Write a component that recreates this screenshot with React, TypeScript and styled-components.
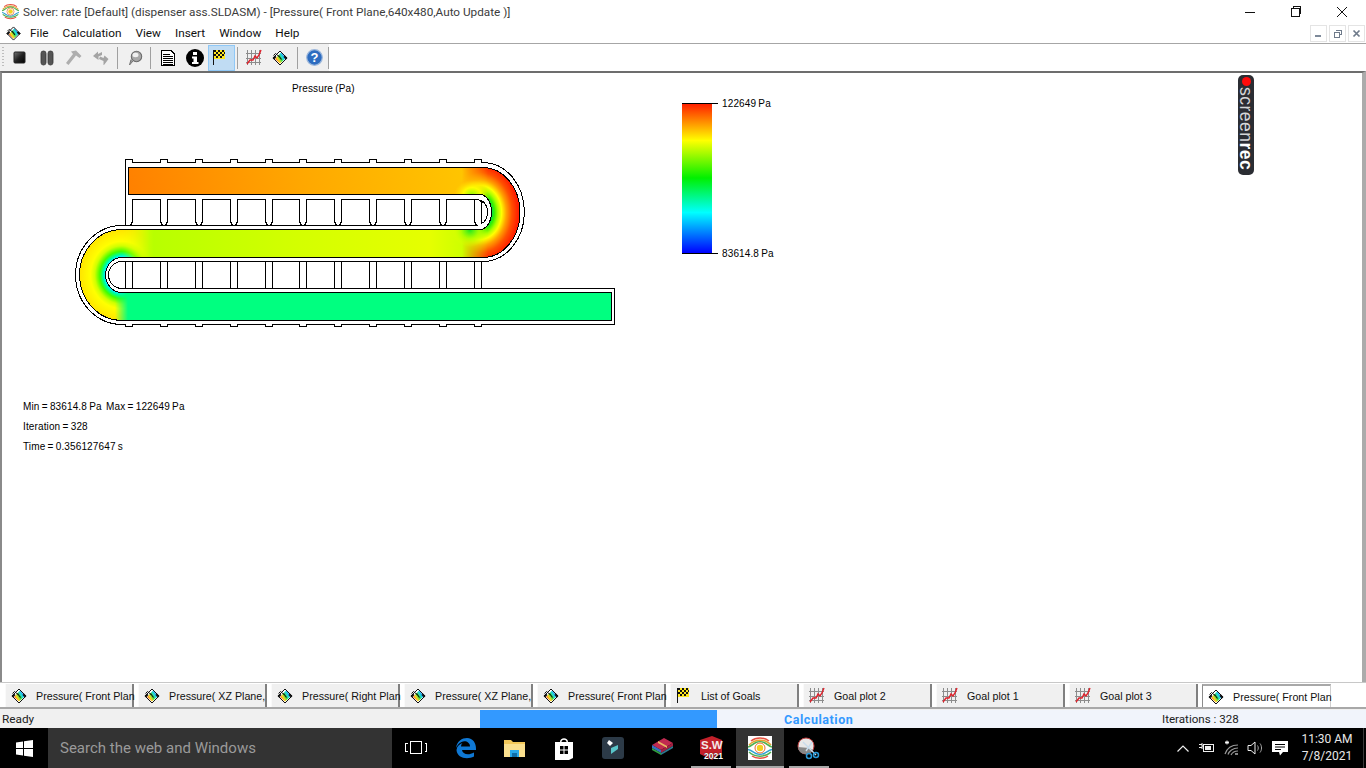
import React, { useId } from "react";
import styled, { createGlobalStyle } from "styled-components";

const Global = createGlobalStyle`
  html, body { margin: 0; padding: 0; background: #fff; overflow: hidden; }
  * { box-sizing: border-box; }
`;

const UI = `"Liberation Sans", Arial, sans-serif`;
const WIN = `Roboto, "Noto Sans", sans-serif`;

const Page = styled.div`
  width: 1366px; height: 768px; display: flex; flex-direction: column;
  font-family: ${UI}; color: #000; background: #fff; overflow: hidden;
`;
const TitleBar = styled.div`
  height: 23px; flex: none; display: flex; align-items: center; background: #fff;
`;
const TitleIcon = styled.span`
  width: 23px; display: flex; justify-content: center; padding-right: 3px;
`;
const TitleText = styled.span`
  font-family: ${WIN}; font-size: 11.75px; color: #3c3c3c; white-space: nowrap; flex: 1;
`;
const WinButton = styled.span`
  width: 46px; height: 22px; display: flex; align-items: center; justify-content: center;
`;
const WinButtons = styled.div`
  display: flex; margin-right: 1px;
`;
const MenuBar = styled.div`
  height: 20px; flex: none; display: flex; align-items: center; background: #fff; padding-left: 6px;
`;
const MenuItems = styled.div`
  display: flex; flex: 1; gap: 14px; margin-left: 9px; font-family: ${WIN}; font-size: 11.8px; color: #111;
`;
const MdiButtons = styled.div`
  display: flex; gap: 2px; margin-right: 1px;
`;
const MdiButton = styled.span`
  width: 17px; height: 17px; border: 1px solid #e4e4e4; display: flex; align-items: center; justify-content: center;
`;
const Toolbar = styled.div`
  height: 28px; flex: none; display: flex; align-items: center; background: #fff;
  border-top: 1px solid #a6a6a6;
`;
const ToolGroup = styled.div`
  height: 27px; display: flex; align-items: center; background: #f0f0f0; padding-left: 6px; position: relative; width: 329px;
`;
const Grip = styled.span`
  position: absolute; left: 2px; top: 3px; bottom: 3px; width: 2px;
  background: repeating-linear-gradient(to bottom, #bdbdbd 0 1px, transparent 1px 3px);
`;
const ToolButton = styled.span<{ $w?: number; $active?: boolean }>`
  width: ${(p) => p.$w ?? 27}px; height: 26px; flex: none; display: flex; align-items: center;
  justify-content: ${(p) => (p.$active ? "flex-start" : "center")};
  padding-left: ${(p) => (p.$active ? "3px" : "0")};
  background: ${(p) => (p.$active ? "#c0dcf3" : "transparent")};
  border: ${(p) => (p.$active ? "1px solid #90c8f6" : "none")};
`;
const ToolSep = styled.span<{ $l: number; $r: number }>`
  width: 1px; height: 22px; flex: none; background: #a0a0a0;
  margin-left: ${(p) => p.$l}px; margin-right: ${(p) => p.$r}px;
`;
const Canvas = styled.div`
  flex: 1; position: relative; background: #fff; min-height: 0;
  border-top: 2px solid #6d6d6d; border-left: 2px solid #8a8a8a; border-right: 4px solid #ababab;
  overflow: hidden;
`;
const PlotSvg = styled.svg`
  position: absolute; left: -2px; top: -2px; display: block;
`;
const PlotLabel = styled.div<{ $x: number; $y: number }>`
  position: absolute; left: ${(p) => p.$x - 2}px; top: ${(p) => p.$y - 72}px;
  font-family: "Liberation Sans", Arial, sans-serif; font-size: 10px; line-height: 12px; white-space: pre; color: #000;
  letter-spacing: 0.13px; word-spacing: -0.7px;
`;
const RecBadge = styled.div`
  position: absolute; left: 1236px; top: 2px; width: 16px; height: 100px; border-radius: 5px;
  background: #2b2d33; display: flex; flex-direction: column; align-items: center; padding-top: 2px;
`;
const RecDot = styled.span`
  width: 9px; height: 9px; border-radius: 50%; background: #ff0b0b; flex: none;
`;
const RecText = styled.span`
  writing-mode: vertical-rl; font-family: "Liberation Sans", sans-serif; font-size: 17.5px; line-height: 16px; color: #d5d6d8; margin-top: 1px; white-space: nowrap; letter-spacing: 0.5px;
  b { color: #fff; font-weight: 700; }
`;
const TabStrip = styled.div`
  height: 27px; flex: none; display: flex; padding: 1px 0 0 5px; background: #fff;
  border-top: 1px solid #c8c8c8; border-bottom: 2px solid #a8a8a8; align-items: stretch;
`;
const Tab = styled.div<{ $active?: boolean }>`
  width: 129px; margin-right: 4px; flex: none; display: flex; align-items: center;
  background: ${(p) => (p.$active ? "#fff" : "#f0f0f0")};
  border-right: ${(p) => (p.$active ? "1px solid #cfcfcf" : "2px solid #808080")};
  border-left: ${(p) => (p.$active ? "1px solid #8c8c8c" : "1px solid #fafafa")};
  border-top: ${(p) => (p.$active ? "2px solid #a8a8a8" : "none")};
`;
const TabIcon = styled.span`
  width: 26px; margin-right: 4px; flex: none; display: flex; justify-content: center;
`;
const TabText = styled.span`
  font-family: ${UI}; font-size: 10.7px; white-space: nowrap; color: #111;
`;
const StatusBar = styled.div`
  height: 19px; flex: none; display: flex; background: #f0f0f0; padding-top: 1px;
`;
const Ready = styled.span`
  width: 480px; padding: 1px 0 0 2px; font-family: ${WIN}; font-size: 11.8px; line-height: 17px; color: #222;
`;
const ProgressTrack = styled.div`
  flex: 1; position: relative; background: #f1f4fb; display: flex; align-items: center;
`;
const ProgressFill = styled.div`
  position: absolute; left: 0; top: 0; bottom: 0; background: #3399ff;
`;
const ProgressLabel = styled.span`
  margin-left: 304px; width: 378px; font-family: ${WIN}; font-weight: 700; font-size: 12.5px; color: #3399ff; letter-spacing: 0.55px; position: relative;
`;
const Iterations = styled.span`
  font-family: ${WIN}; font-size: 11.6px; color: #222; position: relative;
`;
const Taskbar = styled.div`
  height: 40px; flex: none; background: #000; display: flex; align-items: stretch; color: #fff;
`;
const StartButton = styled.span`
  width: 48px; flex: none; display: flex; align-items: center; justify-content: center;
`;
const SearchBox = styled.div`
  width: 344px; flex: none; background: #333; color: #9a9a9a; font-family: ${WIN}; font-size: 15px;
  display: flex; align-items: center; padding-left: 12px; white-space: nowrap;
`;
const TaskSlot = styled.span<{ $w?: number; $ml?: number; $active?: boolean; $open?: boolean }>`
  width: ${(p) => p.$w ?? 49}px; margin-left: ${(p) => p.$ml ?? 0}px; flex: none; display: flex; align-items: center; justify-content: center; position: relative;
  background: ${(p) => (p.$active ? "#333" : "transparent")};
  ${(p) => p.$open ? `&::after { content: ""; position: absolute; left: ${p.$active ? 0 : 5}px; right: ${p.$active ? 0 : 4}px; bottom: 0; height: 2px; background: #a8a8a8; }` : ""}
`;
const SwBadge = styled.span`
  position: absolute; left: 12px; top: 8px; width: 25px; height: 25px;
`;
const SwYear = styled.span`
  position: absolute; left: 18px; top: 23px; font-family: ${UI}; font-weight: 700; font-size: 8.5px; color: #fff; text-shadow: 0 0 1px #000;
`;
const SwMark = styled.span`
  position: absolute; left: 15px; top: 11px; font-family: ${UI}; font-weight: 700; font-size: 11.5px; color: #f4e8e8;
`;
const Tray = styled.div`
  flex: 1; display: flex; align-items: center; justify-content: flex-end; padding-right: 2px;
`;
const TrayIcon = styled.span<{ $w: number }>`
  width: ${(p) => p.$w}px; flex: none; display: flex; justify-content: center; align-items: center;
`;
const Clock = styled.div`
  width: 66px; margin-left: 1px; text-align: center; font-family: ${WIN}; font-size: 12px; line-height: 17px; color: #e8e8e8;
`;
const TrayEdge = styled.span`
  width: 1px; height: 40px; background: #3a3a3a; margin-left: 3px;
`;

const Diamond = ({ s = 16 }: { s?: number }) => {
  const id = useId();
  return (
    <svg width={s} height={s} viewBox="0 0 16 16">
      <defs>
        <linearGradient id={id} x1="0.1" y1="0.9" x2="1" y2="0.35">
          <stop offset="0" stopColor="#f03030" />
          <stop offset="0.28" stopColor="#ffd820" />
          <stop offset="0.5" stopColor="#40e040" />
          <stop offset="0.72" stopColor="#20d8e8" />
          <stop offset="1" stopColor="#2040e8" />
        </linearGradient>
      </defs>
      <path d="M8 1 L15 8 L8 15 L1 8 Z" fill="#fff" />
      <path d="M9 2.500 L14 8 L8 13.500 L3 9 Z" fill={`url(#${id})`} />
      <path d="M1.500 5.500 L3.500 3.500 L7 6.500 M8 1 L1 8 L8 15 M8 1 L15 8 L8 15" fill="none" stroke="#111" strokeWidth="1" />
      <path d="M0.500 8 L3 5.500 L4.500 7 L2 9.500 Z M15.500 8 L13 5.500 L11.500 7 L14 9.500 Z" fill="#111" />
      <path d="M6.500 5.500 L9.500 9.500" stroke="#111" strokeWidth="1.100" />
    </svg>
  );
};

const Flag = () => (
  <svg width="16" height="17" viewBox="0 0 16 17" shapeRendering="crispEdges">
    <rect x="1" y="1" width="1" height="15" fill="#111" />
    <rect x="2" y="1" width="11" height="9" fill="#ffe820" />
    <g fill="#111">
      <rect x="2" y="1" width="2" height="2" /><rect x="6" y="1" width="2" height="2" /><rect x="10" y="1" width="2" height="2" />
      <rect x="4" y="3" width="2" height="2" /><rect x="8" y="3" width="2" height="2" /><rect x="12" y="3" width="1" height="2" />
      <rect x="2" y="5" width="2" height="2" /><rect x="6" y="5" width="2" height="2" /><rect x="10" y="5" width="2" height="2" />
      <rect x="4" y="7" width="2" height="2" /><rect x="8" y="7" width="2" height="2" />
    </g>
  </svg>
);

const PlotIcon = () => (
  <svg width="16" height="17" viewBox="0 0 16 17">
    <g stroke="#8c8c8c" strokeWidth="1" shapeRendering="crispEdges">
      <path d="M1.500 1V16M5.500 1V16M9.500 1V16M13.500 1V16M0 4.500H15M0 9.500H15M0 13.500H15" fill="none" />
    </g>
    <path d="M1 15 L4 11 L7 11 L9 7 L11 9 L13 6 L15 1" fill="none" stroke="#e0202a" strokeWidth="1.400" />
  </svg>
);

const SolverIcon = ({ s = 16, white }: { s?: number; white?: boolean }) => (
  <svg width={s} height={s} viewBox="0 0 24 24">
    {white && <rect width="24" height="24" fill="#fff" />}
    <path d="M3 5 C8 1 16 1 21 5" stroke="#e85040" strokeWidth="1.500" fill="none" />
    <path d="M1 9 C7 2.500 17 2.500 23 9" stroke="#e8a030" strokeWidth="1.500" fill="none" />
    <path d="M0 11 C3 10 5 8 8 6.500 C10 5.500 14 5.500 16 6.500 C19 8 21 10 24 11" stroke="#50b050" strokeWidth="1.500" fill="none" />
    <path d="M0 13.500 C3 14 5 16 8 17.500 C10 18.500 14 18.500 16 17.500 C19 16 21 14 24 13.500" stroke="#30a0d0" strokeWidth="1.500" fill="none" />
    <path d="M1 16 C7 21.500 17 21.500 23 16" stroke="#50b050" strokeWidth="1.500" fill="none" />
    <path d="M4 20 C8 23 16 23 20 20" stroke="#e85040" strokeWidth="1.500" fill="none" />
    <circle cx="12" cy="12" r="5" fill="#fff" stroke="#e86a30" strokeWidth="1" />
    <circle cx="12" cy="12" r="3.200" fill="#f4d020" />
  </svg>
);

const Stop = () => (
  <svg width="14" height="14" viewBox="0 0 14 14">
    <defs><linearGradient id="stopg" x1="0" y1="0" x2="1" y2="1"><stop offset="0" stopColor="#777" /><stop offset="0.5" stopColor="#222" /><stop offset="1" stopColor="#000" /></linearGradient></defs>
    <rect x="1" y="1" width="11" height="11" rx="1" fill="url(#stopg)" stroke="#222" />
  </svg>
);
const Pause = () => (
  <svg width="14" height="16" viewBox="0 0 14 16">
    <rect x="1" y="1" width="5" height="14" rx="2.400" fill="#555" stroke="#333" strokeWidth="0.800" />
    <rect x="8" y="1" width="5" height="14" rx="2.400" fill="#555" stroke="#333" strokeWidth="0.800" />
  </svg>
);
const Hammer = () => (
  <svg width="18" height="16" viewBox="0 0 18 16">
    <path d="M6 1.500 L11 .500 L16.500 6 L14.500 8 L11 5.500 L3.500 15 L1 13 L8 4 Z" fill="#aeaeae" />
  </svg>
);
const Arrows = () => (
  <svg width="16" height="16" viewBox="0 0 16 16">
    <path d="M0 6 L5 1.500 L5 4 L9 2 L9 5 L5.500 6.500 L5.500 10 Z" fill="#a4a4a4" />
    <path d="M15.500 9 L11 15 L10.500 15 L10.500 11 L6 9 L7 6.500 L10.500 8 L11.500 5.500 Z" fill="#a4a4a4" />
  </svg>
);
const Pin = () => (
  <svg width="16" height="16" viewBox="0 0 16 16">
    <circle cx="9.500" cy="6.500" r="5.200" fill="#a8a8a8" stroke="#6c6c6c" strokeWidth="1.100" />
    <ellipse cx="8.500" cy="5" rx="3" ry="2.200" fill="#f0f0f0" />
    <path d="M6 11 L2.500 15 L4 9.500" fill="#999" stroke="#777" strokeWidth="1" />
  </svg>
);
const Doc = () => (
  <svg width="16" height="18" viewBox="0 0 16 18" shapeRendering="crispEdges">
    <path d="M1.500 1.500H11L14.500 5V16.500H1.500Z" fill="#fff" stroke="#000" />
    <path d="M3 5H10M3 7H13M3 9H13M3 11H13M3 13H13M3 15H13" stroke="#000" />
  </svg>
);
const Info = () => (
  <svg width="18" height="18" viewBox="0 0 18 18">
    <circle cx="9" cy="9" r="9" fill="#000" />
    <rect x="7" y="3" width="4" height="3" fill="#fff" />
    <path d="M6 7.500H11V13H12.500V15H6V13H7.500V9.500H6Z" fill="#fff" />
  </svg>
);
const Help = () => (
  <svg width="17" height="17" viewBox="0 0 17 17">
    <circle cx="8.500" cy="8.500" r="7.800" fill="#2d6cc0" stroke="#9db8dc" strokeWidth="1.200" />
    <text x="8.500" y="13" textAnchor="middle" fontFamily="Liberation Sans" fontWeight="700" fontSize="13" fill="#fff">?</text>
  </svg>
);

const teeth = [160.5, 195.5, 230.5, 265.5, 299.5, 334.5, 369.5, 404.5, 439.5, 474.5];
const cells: [number, number][] = [
  [132.5, 160.5], [167.5, 195.5], [202.5, 230.5], [237.5, 265.5], [272.5, 299.5],
  [306.5, 334.5], [341.5, 369.5], [376.5, 404.5], [411.5, 439.5], [446.5, 474.5],
];
const FLUID =
  "M128.5 167.5 H483 A37 45 0 0 1 483 257.5 H122 A16.5 17.5 0 0 0 122 292.5 H611.5 V320.5 H122 A42.5 45.5 0 0 1 122 229.5 H480 A11.5 17.5 0 0 0 480 194.5 H128.5 Z";

const topWall =
  "M125.5 225.5 V159.5 H132.5 V162.5 " +
  teeth.map((x) => `H${x} V159.5 H${x + 7} V162.5`).join(" ") +
  " H483 A41 49 0 0 1 483 261.5 H122 A13.5 13.5 0 0 0 122 288.5 H614.5 V324.5 " +
  teeth.slice().reverse().map((x) => `H${x + 7} V326.5 H${x} V324.5`).join(" ") +
  " H132.5 V326.5 H125.5 V324.5 H122 A46.5 49.5 0 0 1 122 225.5 H471";

const Plot = () => (
  <PlotSvg width="1366" height="613" viewBox="0 71 1366 613">
    <defs>
      <linearGradient id="legend" x1="0" y1="0" x2="0" y2="1">
        <stop offset="0" stopColor="#ff1a00" />
        <stop offset="0.25" stopColor="#ffff00" />
        <stop offset="0.5" stopColor="#00f000" />
        <stop offset="0.73" stopColor="#00ffff" />
        <stop offset="1" stopColor="#0000ff" />
      </linearGradient>
      <linearGradient id="ch1" gradientUnits="userSpaceOnUse" x1="128" y1="195" x2="470" y2="120">
        <stop offset="0" stopColor="#ff8000" />
        <stop offset="0.5" stopColor="#ffa800" />
        <stop offset="1" stopColor="#ffc800" />
      </linearGradient>
      <linearGradient id="ch2" gradientUnits="userSpaceOnUse" x1="130" y1="229" x2="470" y2="229">
        <stop offset="0" stopColor="#e8ff00" />
        <stop offset="0.07" stopColor="#b8ff00" />
        <stop offset="0.5" stopColor="#d4ff00" />
        <stop offset="0.88" stopColor="#e6ff00" />
        <stop offset="1" stopColor="#c8ff00" />
      </linearGradient>
      <radialGradient id="uL" gradientUnits="userSpaceOnUse" cx="0" cy="0" r="1" gradientTransform="translate(122 275) scale(42.5 45.5)">
        <stop offset="0.35" stopColor="#0090ff" />
        <stop offset="0.4" stopColor="#00f0ff" />
        <stop offset="0.45" stopColor="#00ff90" />
        <stop offset="0.52" stopColor="#40ff00" />
        <stop offset="0.64" stopColor="#d0ff00" />
        <stop offset="0.74" stopColor="#ffff00" />
        <stop offset="1" stopColor="#ffe400" />
      </radialGradient>
      <radialGradient id="uR" gradientUnits="userSpaceOnUse" cx="0" cy="0" r="1" gradientTransform="translate(480 212.5) scale(40 50)">
        <stop offset="0.3" stopColor="#00e040" />
        <stop offset="0.37" stopColor="#40f000" />
        <stop offset="0.45" stopColor="#a8ff00" />
        <stop offset="0.54" stopColor="#ffff00" />
        <stop offset="0.66" stopColor="#ffa000" />
        <stop offset="0.8" stopColor="#ff5000" />
        <stop offset="0.95" stopColor="#ff2000" />
      </radialGradient>
      <radialGradient id="glowG">
        <stop offset="0" stopColor="#20e820" stopOpacity="1" />
        <stop offset="0.5" stopColor="#a8ff00" stopOpacity="0.85" />
        <stop offset="1" stopColor="#e8ff00" stopOpacity="0" />
      </radialGradient>
      <radialGradient id="glowY">
        <stop offset="0" stopColor="#90f800" stopOpacity="1" />
        <stop offset="0.5" stopColor="#ffff00" stopOpacity="0.9" />
        <stop offset="1" stopColor="#ffe000" stopOpacity="0" />
      </radialGradient>
      <linearGradient id="fadeLT" gradientUnits="userSpaceOnUse" x1="122" y1="0" x2="150" y2="0">
        <stop offset="0" stopColor="#fff" /><stop offset="1" stopColor="#000" />
      </linearGradient>
      <linearGradient id="fadeLB" gradientUnits="userSpaceOnUse" x1="115" y1="0" x2="128" y2="0">
        <stop offset="0" stopColor="#fff" /><stop offset="1" stopColor="#000" />
      </linearGradient>
      <linearGradient id="fadeR" gradientUnits="userSpaceOnUse" x1="462" y1="0" x2="488" y2="0">
        <stop offset="0" stopColor="#000" /><stop offset="1" stopColor="#fff" />
      </linearGradient>
      <mask id="mLT" maskUnits="userSpaceOnUse" x="70" y="220" width="90" height="55"><rect x="70" y="220" width="90" height="55" fill="url(#fadeLT)" /></mask>
      <mask id="mLB" maskUnits="userSpaceOnUse" x="70" y="275" width="60" height="50"><rect x="70" y="275" width="60" height="50" fill="url(#fadeLB)" /></mask>
      <mask id="mR" maskUnits="userSpaceOnUse" x="450" y="160" width="80" height="105"><rect x="450" y="160" width="80" height="105" fill="url(#fadeR)" /></mask>
      <clipPath id="fluid"><path d={FLUID} /></clipPath>
    </defs>

    <g clipPath="url(#fluid)">
      <rect x="125" y="165" width="370" height="32" fill="url(#ch1)" />
      <rect x="120" y="227" width="375" height="32" fill="url(#ch2)" />
      <rect x="100" y="290" width="514" height="33" fill="#00ff80" />
      <rect x="70" y="220" width="90" height="55" fill="url(#uL)" mask="url(#mLT)" />
      <rect x="70" y="275" width="60" height="50" fill="url(#uL)" mask="url(#mLB)" />
      <rect x="450" y="160" width="80" height="105" fill="url(#uR)" mask="url(#mR)" />
      <ellipse cx="470" cy="230" rx="18" ry="17" fill="url(#glowG)" />
      <ellipse cx="472" cy="195" rx="18" ry="15" fill="url(#glowY)" />
    </g>

    <g fill="none" stroke="#000" strokeWidth="1" shapeRendering="crispEdges">
      <path d={FLUID} />
      <path d={topWall} />
      {cells.map(([a, b], i) => (
        <path key={i} d={`M${a - 2} 225.5 L${a} 221.5 V199.5 H${b} V221.5 L${b + 2} 225.5`} />
      ))}
      {cells.map(([a, b], i) => (
        <path key={`b${i}`} d={`M${a} 261.5 V288.5 M${b} 261.5 V288.5 M${b + 7} 261.5 V288.5`} />
      ))}
      <path d="M125.5 261.5 V288.5" />
      <path d="M481.5 200.5 C485 202 487.5 207 487.5 212 C487.5 218 485 222 481.5 223.5 Z" />
      <path d="M474.5 199.5 H478 L484 203" />
      <path d="M471 225.5 L478 225.5" />
    </g>

    <rect x="682" y="103" width="30" height="150" fill="url(#legend)" />
    <g stroke="#000" strokeWidth="1" shapeRendering="crispEdges">
      <path d="M682 103.5H718M682 253.5H718" />
    </g>
  </PlotSvg>
);

const pressureTabs = [
  "Pressure( Front Plan",
  "Pressure( XZ Plane,",
  "Pressure( Right Plan",
  "Pressure( XZ Plane,",
  "Pressure( Front Plan",
];

export default function App() {
  return (
    <Page>
      <Global />
      <TitleBar>
        <TitleIcon><SolverIcon s={17} /></TitleIcon>
        <TitleText>Solver: rate [Default] (dispenser ass.SLDASM) - [Pressure( Front Plane,640x480,Auto Update )]</TitleText>
        <WinButtons>
          <WinButton>
            <svg width="12" height="12" viewBox="0 0 12 12"><path d="M1 6.500H11" stroke="#111" /></svg>
          </WinButton>
          <WinButton>
            <svg width="12" height="12" viewBox="0 0 12 12" fill="none" stroke="#111" shapeRendering="crispEdges"><path d="M3.500 2.500V.500H10.500V7.500H8.500" /><rect x="1" y="2.500" width="8" height="8" /></svg>
          </WinButton>
          <WinButton>
            <svg width="12" height="12" viewBox="0 0 12 12"><path d="M1 1L11 11M11 1L1 11" stroke="#111" strokeWidth="1" /></svg>
          </WinButton>
        </WinButtons>
      </TitleBar>
      <MenuBar>
        <Diamond s={15} />
        <MenuItems>
          <span>File</span><span>Calculation</span><span>View</span><span>Insert</span><span>Window</span><span>Help</span>
        </MenuItems>
        <MdiButtons>
          <MdiButton><svg width="9" height="9" viewBox="0 0 9 9"><rect x="1" y="6" width="6" height="2" fill="#7e8a9a" /></svg></MdiButton>
          <MdiButton><svg width="9" height="9" viewBox="0 0 9 9" fill="none" stroke="#6e7a8a" shapeRendering="crispEdges"><path d="M3 2V1H8V5H6" /><rect x="1" y="3" width="5" height="5" /></svg></MdiButton>
          <MdiButton><svg width="9" height="9" viewBox="0 0 9 9"><path d="M1.500 1.500L7.500 7.500M7.500 1.500L1.500 7.500" stroke="#6e7a8a" strokeWidth="1.700" /></svg></MdiButton>
        </MdiButtons>
      </MenuBar>
      <Toolbar>
        <ToolGroup>
          <Grip />
          <ToolButton><Stop /></ToolButton>
          <ToolButton><Pause /></ToolButton>
          <ToolButton><Hammer /></ToolButton>
          <ToolButton><Arrows /></ToolButton>
          <ToolSep $l={3} $r={3} />
          <ToolButton><Pin /></ToolButton>
          <ToolSep $l={2} $r={3} />
          <ToolButton><Doc /></ToolButton>
          <ToolButton><Info /></ToolButton>
          <ToolButton $active><Flag /></ToolButton>
          <ToolSep $l={2} $r={3} />
          <ToolButton $w={26}><PlotIcon /></ToolButton>
          <ToolButton $w={25}><Diamond /></ToolButton>
          <ToolSep $l={5} $r={3} />
          <ToolButton><Help /></ToolButton>
          <ToolSep $l={0} $r={0} />
        </ToolGroup>
      </Toolbar>
      <Canvas>
        <Plot />
        <PlotLabel $x={292} $y={82}>Pressure (Pa)</PlotLabel>
        <PlotLabel $x={722} $y={97}>122649 Pa</PlotLabel>
        <PlotLabel $x={722} $y={247}>83614.8 Pa</PlotLabel>
        <PlotLabel $x={23} $y={400}>{"Min = 83614.8 Pa  Max = 122649 Pa"}</PlotLabel>
        <PlotLabel $x={23} $y={420}>Iteration = 328</PlotLabel>
        <PlotLabel $x={23} $y={440}>Time = 0.356127647 s</PlotLabel>
        <RecBadge>
          <RecDot />
          <RecText>screen<b>rec</b></RecText>
        </RecBadge>
      </Canvas>
      <TabStrip>
        {pressureTabs.map((t, i) => (
          <Tab key={i}><TabIcon><Diamond /></TabIcon><TabText>{t}</TabText></Tab>
        ))}
        <Tab><TabIcon><Flag /></TabIcon><TabText>List of Goals</TabText></Tab>
        <Tab><TabIcon><PlotIcon /></TabIcon><TabText>Goal plot 2</TabText></Tab>
        <Tab><TabIcon><PlotIcon /></TabIcon><TabText>Goal plot 1</TabText></Tab>
        <Tab><TabIcon><PlotIcon /></TabIcon><TabText>Goal plot 3</TabText></Tab>
        <Tab $active><TabIcon><Diamond /></TabIcon><TabText>Pressure( Front Plan</TabText></Tab>
      </TabStrip>
      <StatusBar>
        <Ready>Ready</Ready>
        <ProgressTrack>
          <ProgressFill style={{ width: 237 }} />
          <ProgressLabel>Calculation</ProgressLabel>
          <Iterations>Iterations : 328</Iterations>
        </ProgressTrack>
      </StatusBar>
      <Taskbar>
        <StartButton>
          <svg width="17" height="17" viewBox="0 0 17 17" fill="#fff"><path d="M0 2.400L7 1.400V8H0ZM8 1.200L17 0V8H8ZM0 9H7V15.600L0 14.600ZM8 9H17V17L8 15.800Z" /></svg>
        </StartButton>
        <SearchBox>Search the web and Windows</SearchBox>
        <TaskSlot $w={48}>
          <svg width="22" height="14" viewBox="0 0 22 14" fill="none" stroke="#fff" shapeRendering="crispEdges"><rect x="5.500" y="0.500" width="11" height="12" /><path d="M2.500 2.500H0.500V10.500H2.500M19.500 2.500H21.500V10.500H19.500" /></svg>
        </TaskSlot>
        <TaskSlot $ml={1}>
          <svg width="22" height="22" viewBox="0 0 22 22">
            <path d="M1 11 C2 4 7 1 12 1 C18 1 21 6 21 12 V13 H7 C7.500 17 13 19 19 15.500 V19.500 C12 23 2 21 1.500 13 C2 9 4.500 7 7.500 6 C6.500 7 6 8.500 6 9.500 H15 C15 5 10 3 6.500 5 C4 6.200 2 8.500 1 11 Z" fill="#0f78d4" />
          </svg>
        </TaskSlot>
        <TaskSlot>
          <svg width="23" height="20" viewBox="0 0 23 20">
            <path d="M1 2 H8 L10 4 H22 V19 H1 Z" fill="#f3c859" />
            <path d="M1 6 H22 V19 H1 Z" fill="#fbe08e" />
            <rect x="7" y="12" width="9" height="7" fill="#28a8ea" />
            <rect x="9" y="15" width="5" height="4" fill="#106ea8" />
          </svg>
        </TaskSlot>
        <TaskSlot>
          <svg width="20" height="24" viewBox="0 0 20 24" fill="#fff">
            <path d="M1 6 H6 C6 1 14 1 14 6 H19 V22 L15 24 H1 Z M7.500 6 H12.500 C12.500 3 7.500 3 7.500 6Z" fillRule="evenodd" />
            <path d="M6 10H9.500V13.500H6ZM10.500 10H14V13.500H10.500ZM6 14.500H9.500V18H6ZM10.500 14.500H14V18H10.500Z" fill="#000" />
          </svg>
        </TaskSlot>
        <TaskSlot>
          <svg width="22" height="22" viewBox="0 0 22 22">
            <rect width="22" height="22" rx="3" fill="#2c3a47" />
            <path d="M7 3 L11 6 L8 9 L5 6 Z" fill="#fff" />
            <path d="M9 11 L16 8 L16 12 L9 17 Z" fill="#58c4c8" />
          </svg>
        </TaskSlot>
        <TaskSlot>
          <svg width="24" height="22" viewBox="0 0 24 22">
            <path d="M2 8 L14 1 L23 6 L11 13 Z" fill="#c02a50" />
            <path d="M2 8 L11 13 V16 L2 11 Z" fill="#3870c0" />
            <path d="M11 13 L23 6 V9 L11 16 Z" fill="#a02040" />
            <path d="M2 11 L11 16 V18 L2 13 Z" fill="#30a040" />
            <path d="M11 16 L23 9 V11 L11 18 Z" fill="#2c7a90" />
            <path d="M8 4 L17 9 L17 11 L8 6 Z" fill="#e8b860" />
          </svg>
        </TaskSlot>
        <TaskSlot $open>
          <SwBadge>
            <svg width="25" height="25" viewBox="0 0 25 25"><path d="M2 4 L14 0 L24 4 V17 L14 24 L2 18 Z" fill="#c2202a" /></svg>
          </SwBadge>
          <SwMark>S.W</SwMark>
          <SwYear>2021</SwYear>
        </TaskSlot>
        <TaskSlot $active $open $w={48} $ml={1}>
          <SolverIcon s={24} white />
        </TaskSlot>
        <TaskSlot $open>
          <svg width="24" height="24" viewBox="0 0 24 24">
            <ellipse cx="9" cy="10" rx="8" ry="8" fill="#e8e8e8" stroke="#c04040" strokeWidth="1" />
            <path d="M1 11 A8 8 0 0 0 16 14 L12 12 Z" fill="#888" />
            <path d="M6 6 L19 19 M15 6 L9 15" stroke="#c8dcec" strokeWidth="1.400" />
            <circle cx="19" cy="19" r="2.500" fill="none" stroke="#2a9ad8" strokeWidth="1.500" />
            <circle cx="12" cy="20" r="2.500" fill="none" stroke="#2a9ad8" strokeWidth="1.500" />
          </svg>
        </TaskSlot>
        <Tray>
          <TrayIcon $w={24}>
            <svg width="12" height="7" viewBox="0 0 12 7" fill="none" stroke="#eee" strokeWidth="1.200"><path d="M.5 6.500L6 1L11.500 6.500" /></svg>
          </TrayIcon>
          <TrayIcon $w={24}>
            <svg width="16" height="12" viewBox="0 0 16 12" fill="none" stroke="#eee"><rect x="4.500" y="2.500" width="10" height="7" /><rect x="6" y="4" width="6" height="4" fill="#eee" stroke="none" /><path d="M0 2.500H3M0 5.500H3M3 1V7M3 4H5" /></svg>
          </TrayIcon>
          <TrayIcon $w={24}>
            <svg width="16" height="16" viewBox="0 0 16 16" fill="none" stroke="#999" strokeWidth="1.200"><path d="M2 14 C4 8 9 5 15 5M5 14.500 C6 11 10 8 15 8M8 15 C9 13 11 11 15 11" /><path d="M12 14L15 14" stroke="#ddd" /><path d="M2 2.500H6M4 .500V4.500M2.500 1L5.500 4M5.500 1L2.500 4" stroke="#fff" strokeWidth="0.900" /></svg>
          </TrayIcon>
          <TrayIcon $w={24}>
            <svg width="16" height="14" viewBox="0 0 16 14" fill="none" stroke="#eee"><path d="M1 4.500H4L8 1V13L4 9.500H1Z" /><path d="M10.500 4.500C11.500 6 11.500 8 10.500 9.500M13 2.500C15 5 15 9 13 11.500" stroke="#aaa" /></svg>
          </TrayIcon>
          <TrayIcon $w={26}>
            <svg width="16" height="15" viewBox="0 0 16 15"><path d="M0 0H16V11H11L8 14.500L7 11H0Z" fill="#fff" /><path d="M3 3.500H13M3 6H13M3 8.500H9" stroke="#000" /></svg>
          </TrayIcon>
          <Clock>11:30 AM<br />7/8/2021</Clock>
          <TrayEdge />
        </Tray>
      </Taskbar>
    </Page>
  );
}
